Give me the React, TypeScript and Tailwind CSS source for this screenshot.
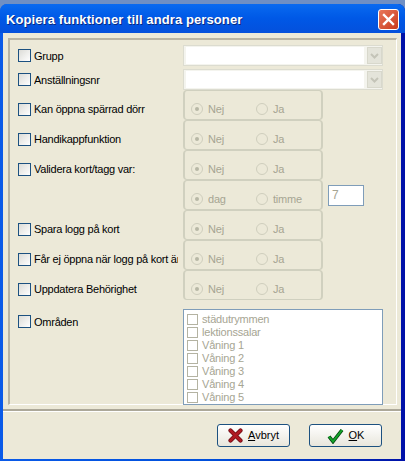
const font = { fontFamily: '"Liberation Sans", Arial, sans-serif' }

const CheckBox = () => (
  <span className="w-[13px] h-[13px] shrink-0 border border-[#1c5180] bg-gradient-to-br from-[#dcdcd7] to-white" />
)

const Radio = ({ label, checked, width }: { label: string; checked?: boolean; width: string }) => (
  <span className={`flex items-center gap-[5px] ${width} text-[11px] tracking-[-0.2px] text-[#a6a593]`}>
    <span className="w-[12px] h-[12px] rounded-full border border-[#cfcebd] flex items-center justify-center shrink-0">
      {checked && <span className="w-[4px] h-[4px] rounded-full bg-[#b8b7a6]" />}
    </span>
    {label}
  </span>
)

const RadioGroup = ({ a = "Nej", b = "Ja" }: { a?: string; b?: string }) => (
  <div className="w-[140px] h-[30px] shrink-0 border-x-2 border-y border-[#d0d0bf] rounded-[4px] flex items-center pl-[6px] pt-[8px]">
    <Radio label={a} checked width="w-[65px]" />
    <Radio label={b} width="w-[60px]" />
  </div>
)

const Label = ({ text, top = "pt-[8px]" }: { text: string; top?: string }) => (
  <div className={`w-[173px] pl-[8px] flex items-center gap-[3px] shrink-0 text-[11px] tracking-[-0.25px] text-black whitespace-nowrap ${top}`}>
    <CheckBox />
    <span className="w-[144px] overflow-hidden pt-px">{text}</span>
  </div>
)

const Combo = () => (
  <div className="w-[200px] h-[21px] bg-[#f4f4ee] border border-[#dcdcd0] flex items-center pl-[2px]">
    <div className="w-[178px] h-[17px] bg-white" />
    <div className="w-[15px] h-[17px] ml-[3px] bg-[#e4e4da] border border-[#d8d8cc] flex items-center justify-center">
      <svg width="9" height="6" viewBox="0 0 9 6">
        <path d="M1 1l3.5 3.5L8 1" fill="none" stroke="#c4c4b8" strokeWidth="2" />
      </svg>
    </div>
  </div>
)

const areas = ["städutrymmen", "lektionssalar", "Våning 1", "Våning 2", "Våning 3", "Våning 4", "Våning 5"]

const Row = ({ text }: { text: string }) => (
  <div className="flex items-center">
    <Label text={text} />
    <RadioGroup />
  </div>
)

const buttonClass =
  "w-[73px] h-[23px] rounded-[3px] border border-[#1c5180] bg-gradient-to-b from-white to-[#e8e6dc] flex items-center justify-center gap-[5px] text-[11px] text-black"

export default function App() {
  return (
    <div className="w-[405px] h-[461px] overflow-hidden bg-[#6f8fc4] pt-[4px]" style={font}>
      {/* window */}
      <div className="w-[405px] h-[457px] flex flex-col rounded-t-[7px] bg-gradient-to-r from-[#0a5ae8] via-[#0050dc] to-[#0010a8] overflow-hidden">
        <div className="h-[29px] shrink-0 flex items-center justify-between pl-[6px] pr-[6px] pt-[2px] bg-gradient-to-b from-[#0a6af0] via-[#0058e6] to-[#0450dc]">
          <span className="text-[13px] font-bold text-white tracking-[0.1px] [text-shadow:1px_1px_0_#0a2a80]">
            Kopiera funktioner till andra personer
          </span>
          <span className="w-[21px] h-[21px] rounded-[3px] border border-white bg-gradient-to-br from-[#e8775a] to-[#c9391a] flex items-center justify-center">
            <svg width="13" height="13" viewBox="0 0 13 13">
              <path d="M2 2l9 9M11 2l-9 9" stroke="white" strokeWidth="2.4" strokeLinecap="square" />
            </svg>
          </span>
        </div>
        <div className="h-[426px] ml-[3px] mr-[4px] bg-[#ece9d8] flex flex-col">
          {/* form panel */}
          <div className="h-[367px] shrink-0 mt-[5px] ml-[5px] mr-[4px] border-l-2 border-t-2 border-[#b8b4a4] border-r border-b border-r-white border-b-white flex flex-col pt-[5px]">
            <div className="flex items-center">
              <Label text="Grupp" top="pt-0" />
              <Combo />
            </div>
            <div className="flex items-center mt-[3px]">
              <Label text="Anställningsnr" top="pt-0" />
              <Combo />
            </div>
            <Row text="Kan öppna spärrad dörr" />
            <Row text="Handikappfunktion" />
            <Row text="Validera kort/tagg var:" />
            <div className="flex items-center">
              <div className="w-[173px] shrink-0" />
              <RadioGroup a="dag" b="timme" />
              <div className="w-[36px] h-[21px] ml-[5px] border border-[#7f9db9] bg-white text-[12px] text-[#a6a593] pl-[3px]">7</div>
            </div>
            <Row text="Spara logg på kort" />
            <Row text="Får ej öppna när logg på kort är" />
            <Row text="Uppdatera Behörighet" />
            <div className="flex mt-[9px]">
              <Label text="Områden" top="pt-[4px] self-start" />
              <div className="w-[200px] h-[96px] border border-[#7f9db9] bg-white pl-[3px] pt-[3px] flex flex-col text-[11px] tracking-[-0.2px] text-[#a6a593]">
                {areas.map((a) => (
                  <div key={a} className="h-[13px] flex items-center gap-[4px] whitespace-nowrap">
                    <span className="w-[11px] h-[11px] border border-[#b4b3a2]" />
                    {a}
                  </div>
                ))}
              </div>
            </div>
          </div>
          {/* footer */}
          <div className="mt-[4px] flex-1 border-t-2 border-[#aca899] shadow-[inset_0_1px_0_#fff] flex items-center justify-end gap-[19px] pr-[19px] pt-[1px]">
            <button className={buttonClass}>
              <svg width="15" height="15" viewBox="0 0 15 15">
                <path d="M2.5 2.5l10 10M12.5 2.5l-10 10" stroke="#6e0a12" strokeWidth="4.2" strokeLinecap="round" />
                <path d="M2.5 2.5l10 10M12.5 2.5l-10 10" stroke="#b01a22" strokeWidth="2.6" strokeLinecap="round" />
              </svg>
              <span><span className="underline">A</span>vbryt</span>
            </button>
            <button className={buttonClass}>
              <svg width="17" height="16" viewBox="0 0 17 16">
                <path d="M2 8.5l4 5L15 2" fill="none" stroke="#064a12" strokeWidth="3.6" />
                <path d="M2 8.5l4 5L15 2" fill="none" stroke="#14a52a" strokeWidth="2" />
              </svg>
              <span><span className="underline">O</span>K</span>
            </button>
          </div>
        </div>
      </div>
    </div>
  )
}
